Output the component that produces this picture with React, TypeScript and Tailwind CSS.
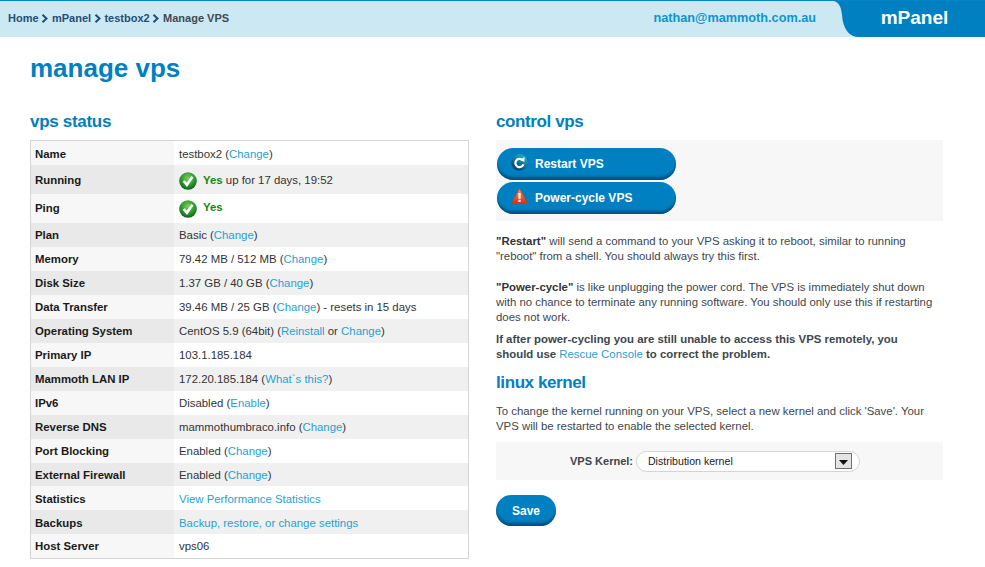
import type { ReactNode } from "react";

function A({ children }: { children: ReactNode }) {
  return <a className="text-[#2a9fd0]">{children}</a>;
}

function Sep() {
  return (
    <svg width="8" height="9" viewBox="0 0 8 9" className="mx-[2.7px] inline-block">
      <path d="M1.5 0.8 L5.5 4.5 L1.5 8.2" fill="none" stroke="#1f4f78" strokeWidth="2" />
    </svg>
  );
}

function CheckIcon() {
  return (
    <svg width="18" height="18" viewBox="0 0 18 18" className="shrink-0">
      <defs>
        <radialGradient id="chk" cx="0.5" cy="0.35" r="0.7">
          <stop offset="0" stopColor="#7fce5a" />
          <stop offset="0.55" stopColor="#2c9a30" />
          <stop offset="1" stopColor="#0b5518" />
        </radialGradient>
      </defs>
      <circle cx="9" cy="9" r="8.8" fill="url(#chk)" />
      <path d="M4.8 9 L7.9 12.8 L13.4 4.8" fill="none" stroke="#fff" strokeWidth="2.6" />
    </svg>
  );
}

function RestartIcon() {
  return (
    <svg width="17" height="17" viewBox="0 0 17 17" className="mb-[5px] shrink-0">
      <defs>
        <linearGradient id="rst" x1="0.8" y1="0" x2="0.2" y2="1">
          <stop offset="0" stopColor="#25b7c4" />
          <stop offset="0.55" stopColor="#0f6f96" />
          <stop offset="1" stopColor="#0a2f5c" />
        </linearGradient>
      </defs>
      <circle cx="8.5" cy="8.5" r="8.2" fill="url(#rst)" />
      <path d="M11.4 6.2 A4.1 4.1 0 1 0 12.4 10.2" fill="none" stroke="#fff" strokeWidth="2.2" />
      <path d="M8.8 5.8 L13.6 3 L13.4 8 Z" fill="#fff" />
    </svg>
  );
}

function WarnIcon() {
  return (
    <svg width="17" height="16" viewBox="0 0 17 16" className="mb-[5px] shrink-0">
      <defs>
        <linearGradient id="wrn" x1="0" y1="0" x2="0" y2="1">
          <stop offset="0" stopColor="#ff9a4a" />
          <stop offset="1" stopColor="#dd2c06" />
        </linearGradient>
      </defs>
      <path d="M8.5 0.5 L16.6 15.5 L0.4 15.5 Z" fill="url(#wrn)" stroke="#d83c0c" strokeWidth="0.6" strokeLinejoin="round" />
      <rect x="7.4" y="5" width="2.2" height="5.8" fill="#fff" />
      <rect x="7.4" y="11.8" width="2.2" height="2.2" fill="#fff" />
    </svg>
  );
}

const rows: { label: string; value: ReactNode; h: string; nudge?: boolean }[] = [
  { label: "Name", h: "h-[24px]", nudge: true, value: <>testbox2 (<A>Change</A>)</> },
  {
    label: "Running",
    h: "h-[29px]",
    nudge: true,
    value: (
      <span className="flex items-center gap-[6px]">
        <CheckIcon />
        <span><b className="font-bold text-[#138a13]">Yes</b> up for 17 days, 19:52</span>
      </span>
    ),
  },
  {
    label: "Ping",
    h: "h-[29px]",
    value: (
      <span className="flex items-center gap-[6px]">
        <CheckIcon />
        <b className="mb-[3px] font-bold text-[#138a13]">Yes</b>
      </span>
    ),
  },
  { label: "Plan", h: "h-[24px]", value: <>Basic (<A>Change</A>)</> },
  { label: "Memory", h: "h-[24px]", value: <>79.42 MB / 512 MB (<A>Change</A>)</> },
  { label: "Disk Size", h: "h-[24px]", value: <>1.37 GB / 40 GB (<A>Change</A>)</> },
  { label: "Data Transfer", h: "h-[24px]", value: <>39.46 MB / 25 GB (<A>Change</A>) - resets in 15 days</> },
  { label: "Operating System", h: "h-[24px]", value: <>CentOS 5.9 (64bit) (<A>Reinstall</A> or <A>Change</A>)</> },
  { label: "Primary IP", h: "h-[24px]", value: <>103.1.185.184</> },
  { label: "Mammoth LAN IP", h: "h-[24px]", value: <>172.20.185.184 (<A>What`s this?</A>)</> },
  { label: "IPv6", h: "h-[24px]", value: <>Disabled (<A>Enable</A>)</> },
  { label: "Reverse DNS", h: "h-[24px]", value: <>mammothumbraco.info (<A>Change</A>)</> },
  { label: "Port Blocking", h: "h-[24px]", value: <>Enabled (<A>Change</A>)</> },
  { label: "External Firewall", h: "h-[23px]", nudge: true, value: <>Enabled (<A>Change</A>)</> },
  { label: "Statistics", h: "h-[24px]", nudge: true, value: <A>View Performance Statistics</A> },
  { label: "Backups", h: "h-[24px]", nudge: true, value: <A>Backup, restore, or change settings</A> },
  { label: "Host Server", h: "h-[24px]", value: <>vps06</> },
];

function StatusTable() {
  return (
    <div className="mt-[7px] w-[439px] border border-[#d4d4d4]">
      {rows.map((r, i) => (
        <div key={r.label} className={`flex ${r.h} items-center ${i % 2 ? "bg-[#f0f0f0]" : "bg-white"}`}>
          <div className={`flex h-full w-[143px] items-center pl-[4px] font-bold text-[#1a1a1a] ${r.nudge ? "pt-[2px]" : ""} ${i % 2 ? "bg-[#e9e9e9]" : "bg-[#f7f7f7]"}`}>
            {r.label}
          </div>
          <div className={`pl-[5px] text-[#333] ${r.nudge ? "pt-[2px]" : ""}`}>{r.value}</div>
        </div>
      ))}
    </div>
  );
}

function BlueButton({ icon, children }: { icon: ReactNode; children: ReactNode }) {
  return (
    <button
      type="button"
      className="flex h-[32px] w-[179px] items-center rounded-full bg-[#0080c0] pl-[14px] pt-[1px] text-[12px] font-bold text-white shadow-[inset_0_-4px_3px_-1px_#00507c]"
    >
      <span className="flex w-[24px] items-center">{icon}</span>
      {children}
    </button>
  );
}

export default function App() {
  return (
    <div className="h-[567px] w-[985px] overflow-hidden bg-white font-['Liberation_Sans',Arial,sans-serif] text-[11.4px] leading-[15px] text-[#3d464c]">
      <header className="flex h-[37px] border-t border-[#0088c6] bg-[#cce8f3]">
        <div className="flex flex-1 items-center pb-[1px] pl-[8px] text-[11px] font-bold text-[#1f4f78]">
          Home<Sep />mPanel<Sep />testbox2<Sep /><span className="text-[#3f4a54]">Manage VPS</span>
        </div>
        <div className="mr-[11px] flex items-center pb-[2px] text-[12.7px] font-bold text-[#0f95c8]">
          nathan@mammoth.com.au
        </div>
        <svg width="32" height="36" viewBox="0 0 32 36" className="shrink-0">
          <path d="M0 -1 C10 -1 14 3 15 14 C16 28 22 36 32 36 L32 -1 Z" fill="#0080c0" />
        </svg>
        <div className="flex w-[126px] items-center justify-center bg-[#0080c0] pb-[3px] pr-[15px] text-[19px] font-bold text-white">
          mPanel
        </div>
      </header>

      <main className="pl-[30px]">
        <h1 className="mt-[13px] text-[26px] font-bold leading-[36px] text-[#0080c0]">manage vps</h1>
        <div className="mt-[25px] flex">
          <section className="w-[466px]">
            <h2 className="text-[17px] font-bold leading-[22px] tracking-[-0.3px] text-[#0080c0]">vps status</h2>
            <StatusTable />
          </section>

          <section className="w-[447px]">
            <h2 className="text-[17px] font-bold leading-[22px] tracking-[-0.4px] text-[#0080c0]">control vps</h2>
            <div className="mt-[7px] flex h-[81px] flex-col gap-[2px] bg-[#f7f7f7] pl-[1px] pt-[8px]">
              <BlueButton icon={<RestartIcon />}>Restart VPS</BlueButton>
              <BlueButton icon={<WarnIcon />}>Power-cycle VPS</BlueButton>
            </div>
            <p className="mt-[13px]">
              <b className="text-[#333]">"Restart"</b> will send a command to your VPS asking it to reboot, similar to running "reboot" from a shell. You should always try this first.
            </p>
            <p className="mt-[16px]">
              <b className="text-[#333]">"Power-cycle"</b> is like unplugging the power cord. The VPS is immediately shut down with no chance to terminate any running software. You should only use this if restarting does not work.
            </p>
            <p className="mt-[7px] pr-[20px] font-bold">
              If after power-cycling you are still unable to access this VPS remotely, you should use <a className="font-normal text-[#2a9fd0]">Rescue Console</a> to correct the problem.
            </p>
            <h2 className="mt-[10px] text-[17px] font-bold leading-[22px] tracking-[-0.4px] text-[#0080c0]">linux kernel</h2>
            <p className="mt-[10px]">
              To change the kernel running on your VPS, select a new kernel and click 'Save'. Your VPS will be restarted to enable the selected kernel.
            </p>
            <div className="mt-[8px] flex h-[38px] items-center bg-[#f7f7f7] pl-[74px] text-[11px]">
              <span className="mr-[3px] font-bold">VPS Kernel:</span>
              <div className="flex h-[21px] w-[224px] items-center justify-between rounded-full border border-[#d4d4d4] bg-white pl-[11px] pr-[7px] text-[10.6px] text-[#1a1a1a]">
                Distribution kernel
                <span className="flex h-[16px] w-[17px] items-end justify-center border border-[#707070] bg-[#e4e4e4] pb-[3px]">
                  <svg width="9" height="5" viewBox="0 0 9 5"><path d="M0 0 H9 L4.5 5 Z" fill="#111" /></svg>
                </span>
              </div>
            </div>
            <button
              type="button"
              className="mt-[15px] h-[31px] w-[60px] rounded-full bg-[#0080c0] pt-[1px] text-[12px] font-bold text-white shadow-[inset_0_-4px_3px_-1px_#00507c]"
            >
              Save
            </button>
          </section>
        </div>
      </main>
    </div>
  );
}
